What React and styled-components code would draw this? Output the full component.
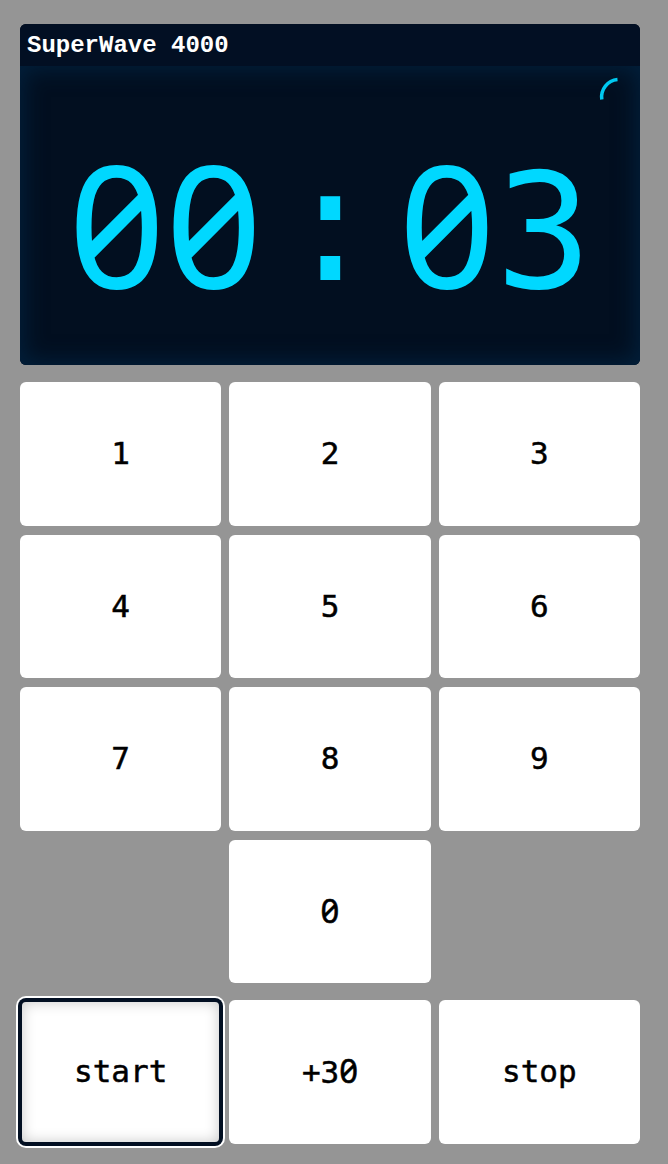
import React from 'react'
import styled, { createGlobalStyle } from 'styled-components'

const GlobalStyle = createGlobalStyle`
    html, body {
        margin: 0;
        padding: 0;
        background: #959595;
    }
    body {
        font-family: "DejaVu Sans Mono", monospace;
    }
`

const Microwave = styled.div`
    width: 620px;
    margin: 0 0 0 20px;
    padding: 24px 0 20px;
    display: flex;
    flex-direction: column;
    gap: 17px;
`

const Screen = styled.div`
    border-radius: 6px;
    overflow: hidden;
    background: #020f21;
`

const Brand = styled.div`
    height: 42px;
    display: flex;
    align-items: center;
    padding-left: 7px;
    background: #020f23;
    color: #ffffff;
    font-family: "Liberation Mono", "Courier New", monospace;
    font-weight: 700;
    font-size: 24px;
`

const Readout = styled.div`
    position: relative;
    height: 299px;
    display: flex;
    align-items: center;
    justify-content: center;
    gap: 20px;
    padding-top: 19px;
    box-sizing: border-box;
    background: #020f20;
    box-shadow: inset 0 0 22px 4px rgba(0, 44, 78, 0.6);
    color: #00d8ff;
    font-family: "DejaVu Sans Mono", monospace;
    font-size: 160px;
    line-height: 1;
`

// slashed zero, the mono font only has a dotted one
const Zero = styled.span`
    font-family: "Noto Sans", sans-serif;
    font-feature-settings: "zero" 1, "tnum" 1;
    font-size: 1.06em;
`

const Spinner = styled.svg`
    position: absolute;
    top: 7px;
    right: -3px;
`

const Pad = styled.div`
    display: grid;
    grid-template-columns: repeat(3, 1fr);
    grid-auto-rows: 143.5px;
    gap: 9px 8px;
`

const Key = styled.button`
    grid-column: ${(p) => p.$col || 'auto'};
    border: ${(p) => (p.$focused ? '2px solid #020f22' : 'none')};
    border-radius: 6px;
    background: #ffffff;
    color: #000000;
    font-family: "DejaVu Sans Mono", monospace;
    font-size: 31px;
    line-height: 1;
    -webkit-text-stroke: 0.5px #000;
    padding: 0;
    cursor: pointer;
    box-shadow: ${(p) =>
        p.$focused
            ? '0 0 0 2px #020f22, 0 0 0 4px #ffffff, inset 0 0 14px rgba(0, 0, 0, 0.22)'
            : 'none'};
`

const withZeros = (text) =>
    text.split('').map((c, i) => (c === '0' ? <Zero key={i}>0</Zero> : c))

const App = () => {
    const digits = ['1', '2', '3', '4', '5', '6', '7', '8', '9']

    return (
        <>
            <GlobalStyle />
            <Microwave>
                <Screen>
                    <Brand>SuperWave 4000</Brand>
                    <Readout>
                        <span>{withZeros('00')}</span>
                        <span>:</span>
                        <span>{withZeros('03')}</span>
                        <Spinner width="48" height="48" viewBox="0 0 48 48">
                            <path
                                d="M6.8 26.5 A17.5 17.5 0 0 1 22.5 6.6"
                                fill="none"
                                stroke="#00c8f0"
                                strokeWidth="3.5"
                            />
                        </Spinner>
                    </Readout>
                </Screen>
                <Pad>
                    {digits.map((d) => (
                        <Key key={d}>{d}</Key>
                    ))}
                    <Key $col="2">{withZeros('0')}</Key>
                </Pad>
                <Pad>
                    <Key $focused>start</Key>
                    <Key>{withZeros('+30')}</Key>
                    <Key>stop</Key>
                </Pad>
            </Microwave>
        </>
    )
}

export default App
